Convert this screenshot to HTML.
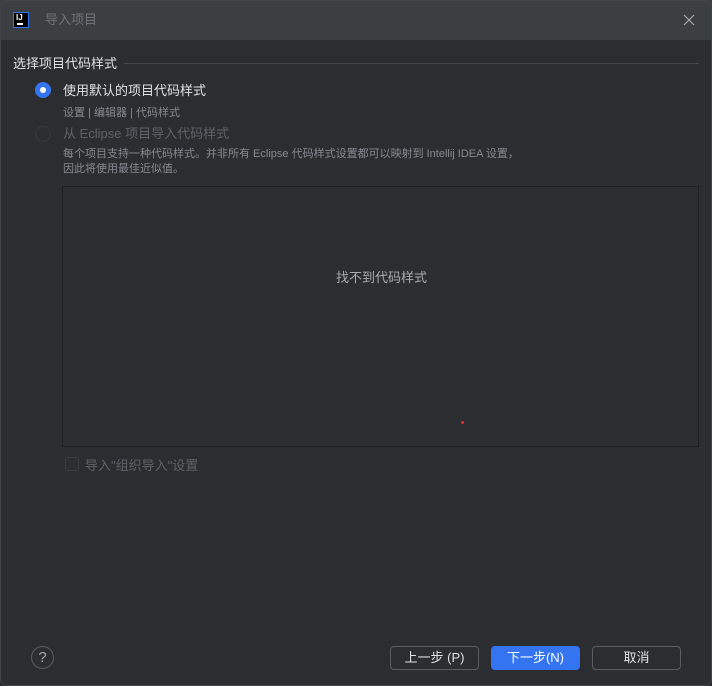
<!DOCTYPE html><html><head><meta charset="utf-8"><style>
*{margin:0;padding:0;box-sizing:border-box}
body{width:712px;height:686px;background:#2b2d30;font-family:"Liberation Sans","Noto Sans CJK SC",sans-serif;position:relative;overflow:hidden;color:#dfe1e5}
.a{position:absolute;white-space:nowrap}
.tb{position:absolute;left:0;top:0;width:712px;height:40px;background:#3c3f41}
.frame{position:absolute;left:0;top:0;width:712px;height:686px;border:1px solid #43454a;border-radius:8px;pointer-events:none}
.btn{position:absolute;top:646px;height:24px;border:1px solid #5a5d63;border-radius:4px;font-size:13px;text-align:center;line-height:22px;color:#dfe1e5}
</style></head><body>
<div class="tb"></div>
<div class="a" style="left:13px;top:12px;width:16px;height:16px;background:#000;border:1px solid #3574f0"><div class="a" style="left:2px;top:0;font-size:8px;font-weight:bold;color:#fff;line-height:9px">IJ</div><div class="a" style="left:3px;top:10px;width:6px;height:1.5px;background:#fff"></div></div>
<div class="a" style="left:45px;top:9px;font-size:13px;color:#6f737a">导入项目</div>
<svg class="a" style="left:682px;top:13px" width="14" height="14"><path d="M2 2L12 12M12 2L2 12" stroke="#a8abb0" stroke-width="1.2"/></svg>
<div class="a" style="left:13px;top:53px;font-size:13px;color:#dfe1e5">选择项目代码样式</div>
<div class="a" style="left:124px;top:63px;width:575px;height:1px;background:#43454a"></div>
<div class="a" style="left:35px;top:82px;width:16px;height:16px;border-radius:50%;background:#3574f0"><div class="a" style="left:5px;top:5px;width:6px;height:6px;border-radius:50%;background:#fff"></div></div>
<div class="a" style="left:63px;top:80px;font-size:13px;color:#dfe1e5">使用默认的项目代码样式</div>
<div class="a" style="left:63px;top:104px;font-size:11px;color:#868a91">设置 | 编辑器 | 代码样式</div>
<div class="a" style="left:35px;top:126px;width:16px;height:16px;border-radius:50%;border:1px solid #393b40;background:#2b2d30"></div>
<div class="a" style="left:63px;top:123px;font-size:13px;color:#5f6268">从 Eclipse 项目导入代码样式</div>
<div class="a" style="left:63px;top:147px;font-size:11px;color:#868a91;line-height:15px">每个项目支持一种代码样式。并非所有 Eclipse 代码样式设置都可以映射到 Intellij IDEA 设置，<br>因此将使用最佳近似值。</div>
<div class="a" style="left:62px;top:186px;width:637px;height:261px;border:1px solid #1e1f22"></div>
<div class="a" style="left:336px;top:267px;font-size:13px;color:#a8abb0">找不到代码样式</div>
<div class="a" style="left:461px;top:421px;width:3px;height:3px;border-radius:50%;background:#e03030"></div>
<div class="a" style="left:65px;top:457px;width:14px;height:14px;border:1px solid #393b40;border-radius:3px"></div>
<div class="a" style="left:85px;top:455px;font-size:13px;color:#5f6268">导入"组织导入"设置</div>
<div class="a" style="left:31px;top:646px;width:23px;height:23px;border-radius:50%;border:1px solid #5a5d63;text-align:center;font-size:15px;line-height:21px;color:#a8abb0">?</div>
<div class="btn" style="left:390px;width:89px">上一步 (P)</div>
<div class="btn" style="left:491px;width:89px;background:#3574f0;border-color:#3574f0;color:#fff">下一步(N)</div>
<div class="btn" style="left:592px;width:89px">取消</div>
<div class="frame"></div>
</body></html>
